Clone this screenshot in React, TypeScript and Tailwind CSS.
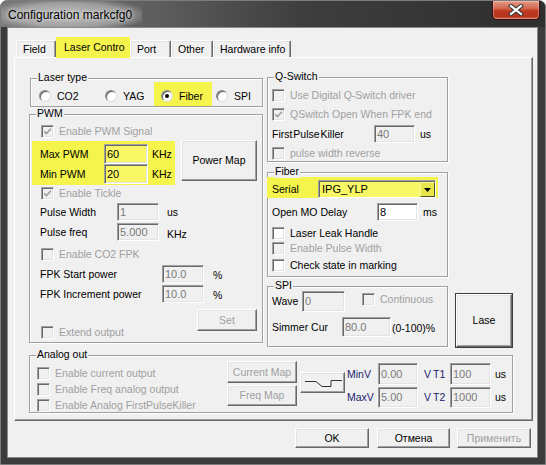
import React from "react";

const Y = "bg-[#f4f44c]";

type CheckProps = { label: string; checked?: boolean; disabled?: boolean; className?: string };

function Check({ label, checked = false, disabled = false, className = "" }: CheckProps) {
  return (
    <div className={`flex items-center h-[14px] shrink-0 ${className}`}>
      <span
        className={`flex items-center justify-center w-[13px] h-[13px] shrink-0 border border-t-[#a0a0a0] border-l-[#a0a0a0] border-r-white border-b-white shadow-[inset_1px_1px_0_#696969,inset_-1px_-1px_0_#e3e3e3] ${
          disabled ? "bg-[#f0f0f0]" : "bg-white"
        }`}
      >
        {checked && (
          <svg width="9" height="9" viewBox="0 0 9 9">
            <path d="M1.2 4.3 L3.5 6.6 L7.8 1.8" fill="none" stroke={disabled ? "#a0a0a0" : "#000"} strokeWidth="1.7" />
          </svg>
        )}
      </span>
      <span className={`ml-[5px] whitespace-nowrap ${disabled ? "text-[#a0a0a0]" : "text-black"}`}>{label}</span>
    </div>
  );
}

function Radio({ label, checked = false }: { label: string; checked?: boolean }) {
  return (
    <div className="flex items-center">
      <span className="flex items-center justify-center w-[12px] h-[12px] shrink-0 rounded-full bg-white border border-t-[#8a8a8a] border-l-[#8a8a8a] border-r-[#dcdcdc] border-b-[#dcdcdc] shadow-[inset_1px_1px_0_#5f5f5f]">
        {checked && <span className="w-[4px] h-[4px] rounded-full bg-black" />}
      </span>
      <span className="ml-[6px] whitespace-nowrap">{label}</span>
    </div>
  );
}

type FieldProps = { value: string; className?: string; disabled?: boolean; yellow?: boolean };

function Field({ value, className = "", disabled = false, yellow = false }: FieldProps) {
  const bg = yellow ? "bg-[#f8f866]" : disabled ? "bg-[#f0f0f0]" : "bg-white";
  return (
    <div
      className={`flex items-center shrink-0 pl-[2px] text-[11px] leading-none border border-t-[#a0a0a0] border-l-[#a0a0a0] border-r-white border-b-white shadow-[inset_1px_1px_0_#696969,inset_-1px_-1px_0_#e3e3e3] ${bg} ${
        disabled ? "text-[#7a7a7a]" : "text-black"
      } ${className}`}
    >
      {value}
    </div>
  );
}

type BtnProps = { children: React.ReactNode; className?: string; disabled?: boolean };

function Btn({ children, className = "", disabled = false }: BtnProps) {
  return (
    <div
      className={`flex items-center justify-center shrink-0 bg-[#f0f0f0] border border-t-white border-l-white border-r-[#696969] border-b-[#696969] shadow-[inset_-1px_-1px_0_#a0a0a0,inset_1px_1px_0_#e3e3e3] whitespace-nowrap ${
        disabled ? "text-[#a0a0a0]" : "text-black"
      } ${className}`}
    >
      {children}
    </div>
  );
}

function Group({ title, className = "", children }: { title: string; className?: string; children?: React.ReactNode }) {
  return (
    <div className={`relative shrink-0 border border-[#a0a0a0] shadow-[inset_1px_1px_0_#fff,1px_1px_0_#fff] ${className}`}>
      <span className="absolute top-[-8px] left-[6px] px-[1px] bg-[#f0f0f0] leading-[13px] whitespace-nowrap">{title}</span>
      {children}
    </div>
  );
}

function Tab({ label, className = "" }: { label: string; className?: string }) {
  return (
    <div
      className={`flex items-center h-[17px] pl-[6px] shrink-0 rounded-t-[2px] border-t border-l border-r border-t-white border-l-white border-r-[#696969] shadow-[inset_-1px_0_0_#a0a0a0,inset_1px_1px_0_#e3e3e3] whitespace-nowrap ${className}`}
    >
      {label}
    </div>
  );
}

export default function App() {
  return (
    <div className="w-[546px] h-[465px] bg-[#3c3c3c] border border-[#7c7c7c] rounded-t-[7px] overflow-hidden flex flex-col font-['Liberation_Sans',Arial,sans-serif] text-[10.5px] leading-[13px] text-black">
      {/* Title bar */}
      <div className="h-[26px] shrink-0 flex items-start bg-[linear-gradient(90deg,#7a7a7a_0%,#5e5e5e_28%,#3e3e3e_55%,#2e2e2e_100%)]">
        <span className="ml-[-3px] mt-[-1px] px-[10px] py-[7px] text-[12px] leading-[16px] text-black bg-[radial-gradient(ellipse_at_center,rgba(255,255,255,0.55)_0%,rgba(255,255,255,0.35)_55%,rgba(255,255,255,0)_80%)] [text-shadow:0_0_4px_#fff]">
          Configuration markcfg0
        </span>
        <div className="ml-auto mr-[5px] w-[48px] h-[19px] rounded-b-[5px] border border-t-0 border-[#3b0d05] bg-[linear-gradient(180deg,#e49a88_0%,#d36a52_40%,#c13820_55%,#b5361f_85%,#cc6448_100%)] shadow-[inset_0_0_0_1px_rgba(255,255,255,0.3)] flex items-center justify-center">
          <svg width="16" height="12" viewBox="0 0 16 12">
            <path d="M3 2 L13 10 M13 2 L3 10" stroke="#3a3a3a" strokeWidth="4.2" strokeLinecap="square" />
            <path d="M3 2 L13 10 M13 2 L3 10" stroke="#ffffff" strokeWidth="2.2" strokeLinecap="square" />
          </svg>
        </div>
      </div>

      {/* Body */}
      <div className="flex h-[431px] shrink-0">
        <div className="w-[6px] shrink-0" />
        <div className="w-[531px] shrink-0 border border-[#8a8a8a] bg-[#f0f0f0] flex flex-col">
          {/* Tabs */}
          <div className="flex items-end h-[29px] pl-[8px] shrink-0">
            <Tab label="Field" className="w-[40px]" />
            <div className={`relative z-10 -mb-[1px] flex items-center h-[21px] w-[74px] pl-[8px] shrink-0 ${Y} whitespace-nowrap`}>
              Laser Contro
            </div>
            <Tab label="Port" className="w-[41px]" />
            <Tab label="Other" className="w-[42px]" />
            <Tab label="Hardware info" className="w-[78px]" />
          </div>

          {/* Panel */}
          <div className="ml-[6px] w-[519px] h-[364px] shrink-0 border border-t-white border-l-white border-r-[#696969] border-b-[#696969] shadow-[inset_-1px_-1px_0_#a0a0a0] flex flex-col pl-[14px] pt-[19px]">
            <div className="flex items-start shrink-0">
              {/* Left column */}
              <div className="flex flex-col mt-[1px] shrink-0">
                <Group title="Laser type" className="ml-[1px] w-[233px] h-[29px]">
                  <div className="flex h-[24px] mt-[3px]">
                    <div className="flex items-center pt-[4px] ml-[8px] w-[66px]">
                      <Radio label="CO2" />
                    </div>
                    <div className="flex items-center pt-[4px] w-[49px]">
                      <Radio label="YAG" />
                    </div>
                    <div className={`flex items-center pt-[4px] w-[58px] pl-[7px] ${Y}`}>
                      <Radio label="Fiber" checked />
                    </div>
                    <div className="flex items-center pt-[4px] ml-[4px]">
                      <Radio label="SPI" />
                    </div>
                  </div>
                </Group>

                <Group title="PWM" className="mt-[7px] w-[234px] h-[229px] flex flex-col">
                  <Check className="mt-[9px] ml-[11px]" label="Enable PWM Signal" checked disabled />
                  <div className="flex items-start mt-[2px]">
                    <div className={`ml-[2px] mt-[1px] w-[143px] h-[44px] ${Y} flex flex-col pl-[8px] pt-[3px]`}>
                      <div className="flex items-center h-[20px]">
                        <span className="w-[64px]">Max PWM</span>
                        <Field value="60" yellow className="w-[44px] h-[20px]" />
                        <span className="ml-[4px]">KHz</span>
                      </div>
                      <div className="flex items-center h-[20px]">
                        <span className="w-[64px]">Min PWM</span>
                        <Field value="20" yellow className="w-[44px] h-[20px]" />
                        <span className="ml-[4px]">KHz</span>
                      </div>
                    </div>
                    <Btn className="ml-[6px] w-[76px] h-[41px]">Power Map</Btn>
                  </div>
                  <Check className="mt-[1px] ml-[11px]" label="Enable Tickle" checked disabled />
                  <div className="flex items-center h-[18px] mt-[3px] pl-[10px]">
                    <span className="w-[77px]">Pulse Width</span>
                    <Field value="1" disabled className="w-[42px] h-[18px]" />
                    <span className="ml-[8px]">us</span>
                  </div>
                  <div className="flex items-center h-[18px] mt-[2px] pl-[10px]">
                    <span className="w-[77px]">Pulse freq</span>
                    <Field value="5.000" disabled className="w-[42px] h-[18px]" />
                    <span className="ml-[8px] mt-[5px]">KHz</span>
                  </div>
                  <Check className="mt-[6px] ml-[11px]" label="Enable CO2 FPK" disabled />
                  <div className="flex items-center h-[18px] mt-[4px] pl-[10px]">
                    <span className="w-[122px]">FPK Start power</span>
                    <Field value="10.0" disabled className="w-[42px] h-[18px]" />
                    <span className="ml-[9px] mt-[3px]">%</span>
                  </div>
                  <div className="flex items-center h-[18px] mt-[2px] pl-[10px]">
                    <span className="w-[122px]">FPK Increment power</span>
                    <Field value="10.0" disabled className="w-[42px] h-[18px]" />
                    <span className="ml-[9px] mt-[3px]">%</span>
                  </div>
                  <div className="flex items-start mt-[6px]">
                    <Check className="mt-[16px] ml-[11px]" label="Extend output" disabled />
                    <Btn disabled className="ml-auto mr-[5px] w-[60px] h-[22px]">
                      Set
                    </Btn>
                  </div>
                </Group>
              </div>

              {/* Right column */}
              <div className="flex flex-col ml-[4px] shrink-0">
                <Group title="Q-Switch" className="w-[181px] h-[85px] flex flex-col">
                  <Check className="mt-[10px] ml-[4px]" label="Use Digital Q-Switch driver" disabled />
                  <Check className="mt-[5px] ml-[4px]" label="QSwitch Open When FPK end" checked disabled />
                  <div className="flex items-center h-[18px] mt-[4px] pl-[4px]">
                    <span className="w-[102px] [word-spacing:-2px]">First Pulse Killer</span>
                    <Field value="40" disabled className="w-[41px] h-[18px]" />
                    <span className="ml-[5px]">us</span>
                  </div>
                  <Check className="mt-[3px] ml-[4px]" label="pulse width reverse" disabled />
                </Group>

                <Group title="Fiber" className="mt-[10px] w-[181px] h-[105px] flex flex-col">
                  <div className={`-ml-[1px] mt-[4px] w-[171px] h-[21px] ${Y} flex items-end pl-[5px]`}>
                    <span className="w-[46px] h-[18px] flex items-center">Serial</span>
                    <div className="flex w-[118px] h-[18px] border border-t-[#a0a0a0] border-l-[#a0a0a0] border-r-white border-b-white shadow-[inset_1px_1px_0_#696969] bg-[#f8f866]">
                      <span className="flex-1 flex items-center pl-[3px] text-[11px] leading-none">IPG_YLP</span>
                      <div className="w-[15px] mt-[1px] flex items-center justify-center bg-[#e6e64a] border border-t-[#fafa9a] border-l-[#fafa9a] border-r-[#505020] border-b-[#505020]">
                        <svg width="7" height="4" viewBox="0 0 7 4">
                          <path d="M0 0 H7 L3.5 4 Z" fill="#000" />
                        </svg>
                      </div>
                    </div>
                  </div>
                  <div className="flex items-center h-[18px] mt-[5px] pl-[4px]">
                    <span className="w-[105px]">Open MO Delay</span>
                    <Field value="8" className="w-[41px] h-[18px]" />
                    <span className="ml-[5px]">ms</span>
                  </div>
                  <Check className="mt-[5px] ml-[4px]" label="Laser Leak Handle" />
                  <Check className="mt-[1px] ml-[4px]" label="Enable Pulse Width" disabled />
                  <Check className="mt-[3px] ml-[4px]" label="Check state in marking" />
                </Group>

                <Group title="SPI" className="mt-[9px] w-[181px] h-[61px] flex flex-col">
                  <div className="flex items-start mt-[4px] pl-[4px]">
                    <span className="w-[30px] h-[21px] flex items-center overflow-hidden whitespace-nowrap">Wave</span>
                    <Field value="0" disabled className="w-[43px] h-[21px]" />
                    <Check className="ml-[17px] mt-[1px]" label="Continuous" disabled />
                  </div>
                  <div className="flex items-center h-[20px] mt-[5px] pl-[4px]">
                    <span className="w-[70px]">Simmer Cur</span>
                    <Field value="80.0" disabled className="w-[49px] h-[20px]" />
                    <span className="ml-[1px] mt-[3px] whitespace-nowrap">(0-100)%</span>
                  </div>
                </Group>
              </div>

              {/* Lase */}
              <div className="ml-[7px] mt-[216px] w-[58px] h-[55px] shrink-0 border border-[#3c3c3c] flex">
                <Btn className="flex-1">Lase</Btn>
              </div>
            </div>

            {/* Analog out */}
            <Group title="Analog out" className="mt-[7px] w-[484px] h-[58px] flex items-start">
              <div className="flex flex-col pl-[7px] pt-[10px] w-[197px] gap-[2px] shrink-0">
                <Check label="Enable current output" disabled />
                <Check label="Enable Freq analog output" disabled />
                <Check label="Enable Analog FirstPulseKiller" disabled />
              </div>
              <div className="flex flex-col shrink-0">
                <Btn disabled className="mt-[5px] w-[70px] h-[22px]">
                  Current Map
                </Btn>
                <Btn disabled className="mt-[2px] w-[70px] h-[21px]">
                  Freq Map
                </Btn>
              </div>
              <Btn className="ml-[3px] mt-[16px] w-[45px] h-[21px]">
                <svg width="41" height="19" viewBox="0 0 41 19">
                  <path d="M3 8.5 H14 L20 13.5 H29 V7.5 H40" fill="none" stroke="#333" strokeWidth="1" />
                </svg>
              </Btn>
              <div className="flex flex-col ml-[2px] shrink-0">
                <div className="flex items-center h-[22px] mt-[7px]">
                  <span className="w-[31px] text-[#22226e]">MinV</span>
                  <Field value="0.00" disabled className="w-[40px] h-[22px]" />
                  <span className="w-[9px] ml-[6px] text-[#22226e]">V</span>
                  <span className="w-[17px] text-[#22226e]">T1</span>
                  <Field value="100" disabled className="w-[41px] h-[22px]" />
                  <span className="ml-[4px]">us</span>
                </div>
                <div className="flex items-center h-[21px] mt-[2px]">
                  <span className="w-[31px] text-[#22226e]">MaxV</span>
                  <Field value="5.00" disabled className="w-[40px] h-[21px]" />
                  <span className="w-[9px] ml-[6px] text-[#22226e]">V</span>
                  <span className="w-[17px] text-[#22226e]">T2</span>
                  <Field value="1000" disabled className="w-[41px] h-[21px]" />
                  <span className="ml-[4px]">us</span>
                </div>
              </div>
            </Group>
          </div>

          {/* Dialog buttons */}
          <div className="flex justify-end pr-[6px] mt-[7px] shrink-0">
            <Btn className="w-[74px] h-[20px]">OK</Btn>
            <Btn className="ml-[8px] w-[73px] h-[20px]">Отмена</Btn>
            <Btn disabled className="ml-[7px] w-[74px] h-[20px]">
              Применить
            </Btn>
          </div>
        </div>
        <div className="w-[7px] shrink-0" />
      </div>
    </div>
  );
}
